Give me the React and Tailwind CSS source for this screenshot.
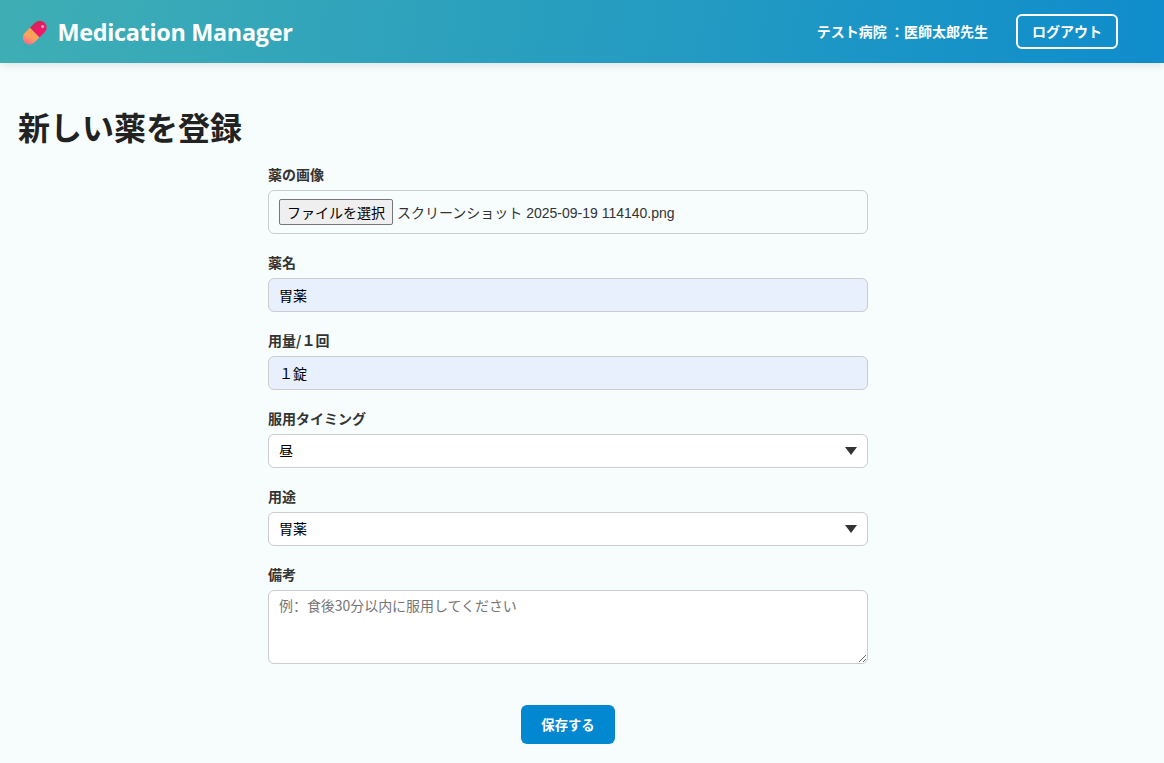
import React from "react";

const jp = "font-['Noto_Sans_CJK_JP',sans-serif]";
const box = "w-full rounded-[6px] border border-[#cccccc] text-[14px] text-black";

function Field({ label, children }) {
  return (
    <div className="flex flex-col">
      <label className="mb-[6px] h-[20px] text-[14px] font-bold leading-[20px] text-[#333333]">{label}</label>
      {children}
    </div>
  );
}

function Pill() {
  return (
    <svg className="h-[24px] w-[24px] shrink-0 overflow-visible" viewBox="0 0 24 24">
      <defs>
        <linearGradient id="pillTop" x1="0" y1="0" x2="1" y2="0.3">
          <stop offset="0" stopColor="#b92f50" />
          <stop offset="0.5" stopColor="#e81b62" />
          <stop offset="1" stopColor="#f3186c" />
        </linearGradient>
        <linearGradient id="pillBottom" x1="0" y1="0" x2="0.3" y2="1">
          <stop offset="0" stopColor="#f5a052" />
          <stop offset="0.5" stopColor="#ffa45c" />
          <stop offset="1" stopColor="#f97486" />
        </linearGradient>
      </defs>
      <g transform="translate(-0.3 0.6) rotate(45 12 12)">
        <path d="M5.2 12V4.7a6.8 6.8 0 0 1 13.6 0V12z" fill="url(#pillTop)" />
        <path d="M5.2 12V19.3a6.8 6.8 0 0 0 13.6 0V12z" fill="url(#pillBottom)" />
      </g>
      <circle cx="19.6" cy="6.4" r="1.5" fill="#ffa0c5" />
    </svg>
  );
}

function SelectBox({ value }) {
  return (
    <div className={`${box} flex h-[34px] items-center justify-between bg-white px-[10px]`}>
      <span className="pb-[2px] leading-[20px]">{value}</span>
      <svg className="h-[8px] w-[12px]" viewBox="0 0 12 8">
        <path d="M0 0H12L6 8z" fill="#333333" />
      </svg>
    </div>
  );
}

export default function App() {
  return (
    <div className={`${jp} h-[763px] overflow-hidden bg-[#f7fdfd]`}>
      <header className="flex h-[63px] items-center justify-between bg-[linear-gradient(100deg,#3faeb4_0%,#0f8dcc_100%)] pl-[23px] pr-[46px] text-white shadow-[0_2px_8px_rgba(0,0,0,0.1)]">
        <div className="flex items-center">
          <Pill />
          <span className="ml-[10.5px] whitespace-nowrap pt-px font-['Open_Sans',sans-serif] text-[23.4px] font-bold leading-[32px] tracking-[-0.31px]">Medication Manager</span>
        </div>
        <div className="flex items-center gap-[28px]">
          <span className="whitespace-pre pb-px text-[14px] font-bold">テスト病院 ：医師太郎先生</span>
          <button className="flex h-[35px] w-[102px] items-center justify-center rounded-[6px] border-2 border-white pb-px text-[14px] font-bold">ログアウト</button>
        </div>
      </header>
      <main>
        <h1 className="ml-[18px] mt-[39px] h-[48px] text-[32px] font-bold leading-[48px] text-[#222222]">新しい薬を登録</h1>
        <form className="ml-[268px] mt-[14px] flex w-[600px] flex-col gap-[18px]">
          <Field label="薬の画像">
            <div className={`${box} flex h-[44px] items-center px-[10px]`}>
              <span className="flex h-[26px] w-[114px] items-center justify-center rounded-[2px] border border-[#767676] bg-[#efefef]">ファイルを選択</span>
              <span className="ml-[4px] whitespace-nowrap pt-[2px] font-['Liberation_Sans','Noto_Sans_CJK_JP',sans-serif] text-[#333333]">スクリーンショット 2025-09-19 114140.png</span>
            </div>
          </Field>
          <Field label="薬名">
            <input className={`${box} h-[34px] bg-[#e8effd] px-[10px] pb-px`} defaultValue="胃薬" />
          </Field>
          <Field label="用量/１回">
            <input className={`${box} h-[34px] bg-[#e8effd] px-[10px] pb-px`} defaultValue="１錠" />
          </Field>
          <Field label="服用タイミング">
            <SelectBox value="昼" />
          </Field>
          <Field label="用途">
            <SelectBox value="胃薬" />
          </Field>
          <Field label="備考">
            <textarea
              className={`${box} block h-[74px] resize-y bg-white px-[10px] py-[4px] font-['Noto_Sans_CJK_SC',sans-serif] leading-[20px] tracking-[-0.05px] placeholder:text-[#757575]`}
              placeholder="例：食後30分以内に服用してください"
            />
          </Field>
          <button type="button" className="mt-[23px] h-[39px] w-[94px] self-center rounded-[6px] bg-[#0288d1] text-[13.33px] font-bold text-white">保存する</button>
        </form>
      </main>
    </div>
  );
}
